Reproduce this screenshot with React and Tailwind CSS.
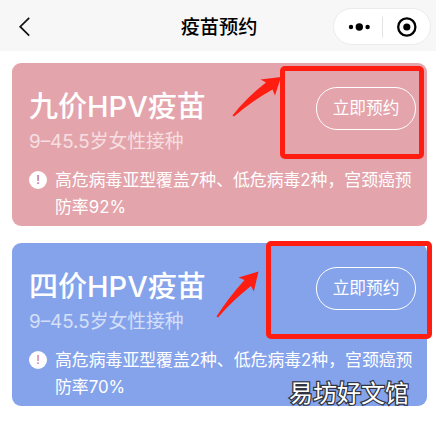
import React from "react";

function Header() {
  return (
    <header className="relative flex h-[51px] items-center justify-center bg-[#f7f7f7] pb-px">
      <svg className="absolute left-[18px] top-[16px]" width="14" height="22" viewBox="0 0 14 22" fill="none" stroke="#111" strokeWidth="1.7">
        <path d="M11.2 1.8 2.2 10.7l9 8.9" />
      </svg>
      <h1 className="mt-[5px] pl-[2px] text-[19.2px] font-medium leading-none text-black">疫苗预约</h1>
      <div className="absolute right-[5px] top-[8px] flex h-[37px] w-[98px] items-center rounded-full border border-[#ebebeb] bg-white">
        <svg width="96" height="35" viewBox="0 0 96 35" fill="#000">
          <circle cx="17" cy="18" r="2.2" />
          <circle cx="25.3" cy="18" r="3.7" />
          <circle cx="33.6" cy="18" r="2.2" />
          <path d="M48.5 7.5v21" stroke="#e3e3e3" />
          <circle cx="72.8" cy="18" r="8.6" fill="none" stroke="#000" strokeWidth="2.3" />
          <circle cx="72.8" cy="18" r="3.6" />
        </svg>
      </div>
    </header>
  );
}

function VaccineCard({ title, detail, color, markColor }) {
  return (
    <section className={`h-[163px] rounded-[9px] pl-[17px] pr-[11px] text-white ${color}`}>
      <div className="flex h-[92px] justify-between">
        <div className="pt-[25px]">
          <h2 className="whitespace-nowrap text-[29px] font-medium leading-[38px]">{title}</h2>
          <p className="mt-[3px] whitespace-nowrap text-[18.8px] leading-[26px] text-white/65">9–45.5岁女性接种</p>
        </div>
        <button className="mt-[24px] flex h-[43px] w-[100px] items-center justify-center rounded-[21px] border border-white text-[16.7px] leading-none">
          立即预约
        </button>
      </div>
      <div className="flex pt-[12px]">
        <span className={`mt-[4px] flex size-[18px] shrink-0 items-center justify-center rounded-full bg-white text-[12px] font-medium leading-none ${markColor}`}>
          !
        </span>
        <p className="ml-[8px] whitespace-nowrap text-[16.85px] leading-[27px]">
          {detail[0]}
          <br />
          {detail[1]}
        </p>
      </div>
    </section>
  );
}

export default function App() {
  return (
    <div className="relative h-[426px] w-[436px] overflow-hidden bg-white font-[Inter,'Noto_Sans_CJK_SC',sans-serif]">
      <Header />
      <main className="flex flex-col gap-[17px] pl-[12px] pr-[9px] pt-[12px]">
        <VaccineCard
          title="九价HPV疫苗"
          detail={["高危病毒亚型覆盖7种、低危病毒2种，宫颈癌预", "防率92%"]}
          color="bg-[#e4a4ab]"
          markColor="text-[#c96f78]"
        />
        <VaccineCard
          title="四价HPV疫苗"
          detail={["高危病毒亚型覆盖2种、低危病毒2种，宫颈癌预", "防率70%"]}
          color="bg-[#85a3eb]"
          markColor="text-[#d8838c]"
        />
      </main>
      <div className="absolute left-[280px] top-[66px] h-[93px] w-[144px] rounded-[5px] border-5 border-[#ff1d12]" />
      <div className="absolute left-[266px] top-[241px] h-[98px] w-[166px] rounded-[5px] border-5 border-[#ff1d12]" />
      <svg className="absolute left-0 top-0" width="436" height="426" fill="#ff1d12">
        <path d="M281 77 260.5 79.5 266 82.5Q247 97 232.5 115.5L234 116.5Q252 101 272.5 89.5L275 95.5Z" />
        <path d="M258.5 271.5 238.5 277.5 244.5 280Q229 297 216.5 316.5L218 317.5Q232 301 251 286L253.8 291.5Z" />
      </svg>
      <div className="absolute left-[289px] top-[380px] whitespace-nowrap text-[24px] leading-[28px] text-white [-webkit-text-stroke:2.5px_#30343f] [paint-order:stroke_fill]">
        易坊好文馆
      </div>
    </div>
  );
}
